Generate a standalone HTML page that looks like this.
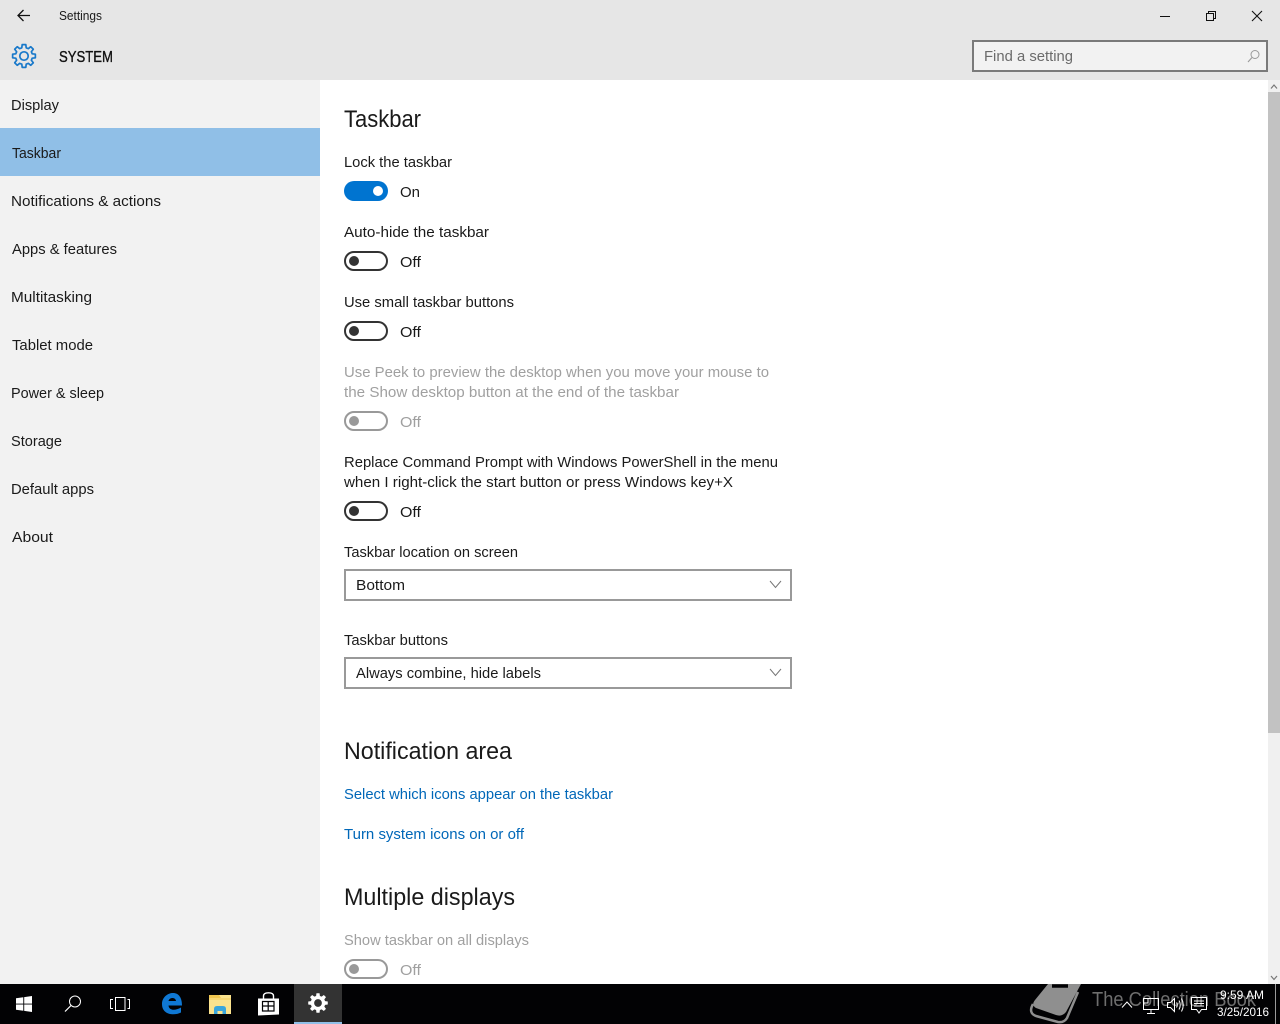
<!DOCTYPE html>
<html><head><meta charset="utf-8"><title>Settings</title>
<style>
html,body{margin:0;padding:0;background:#fff;width:1280px;height:1024px;overflow:hidden}
svg{display:block}
text{font-family:"Liberation Sans",sans-serif;font-size:15px;fill:#1a1a1a}
.h{font-size:24px}
.g{fill:#a0a0a0}
.l{fill:#0067b8}
</style></head><body>
<svg width="1280" height="1024" viewBox="0 0 1280 1024" xmlns="http://www.w3.org/2000/svg">
<rect width="1280" height="1024" fill="#fff"/>
<rect width="1280" height="80" fill="#e6e6e6"/>
<rect y="80" width="320" height="904" fill="#f2f2f2"/>
<rect y="128" width="320" height="48" fill="#90bfe7"/>

<!-- title bar -->
<path d="M18 15.500H30M23.500 10L18 15.500L23.500 21" fill="none" stroke="#111" stroke-width="1.300"/>
<text x="59" y="20" style="font-size:13px" textLength="43" lengthAdjust="spacingAndGlyphs">Settings</text>
<g transform="translate(24 56)" fill="none" stroke="#1979ca" stroke-width="1.700" stroke-linejoin="round">
<polygon points="8.21,-2.2 11.36,-1.8 11.36,1.8 8.21,2.2 7.36,4.25 9.3,6.76 6.76,9.3 4.25,7.36 2.2,8.21 1.8,11.36 -1.8,11.36 -2.2,8.21 -4.25,7.36 -6.76,9.3 -9.3,6.76 -7.36,4.25 -8.21,2.2 -11.36,1.8 -11.36,-1.8 -8.21,-2.2 -7.36,-4.25 -9.3,-6.76 -6.76,-9.3 -4.25,-7.36 -2.2,-8.21 -1.8,-11.36 1.8,-11.36 2.2,-8.21 4.25,-7.36 6.76,-9.3 9.3,-6.76 7.36,-4.25"/>
<circle r="4.200"/>
</g>
<text x="59" y="62" style="font-size:16px;fill:#111;stroke:#111;stroke-width:.35px" textLength="54" lengthAdjust="spacingAndGlyphs">SYSTEM</text>

<!-- window controls -->
<rect x="1160" y="16" width="10" height="1" fill="#111"/>
<path d="M1206.500 13.500H1213.500V20.500H1206.500ZM1208.500 13V11.500H1215.500V18.500H1214" fill="none" stroke="#111" stroke-width="1"/>
<path d="M1252 11L1262 21M1262 11L1252 21" stroke="#111" stroke-width="1.100" fill="none"/>

<!-- search -->
<rect x="973" y="41" width="294" height="30" fill="#f2f2f2" stroke="#7a7a7a" stroke-width="2"/>
<text x="984" y="61" style="fill:#6b6b6b" textLength="89" lengthAdjust="spacingAndGlyphs">Find a setting</text>
<circle cx="1255" cy="54.500" r="4" fill="none" stroke="#9a9a9a" stroke-width="1"/>
<path d="M1252 57.500L1248 62" stroke="#9a9a9a" stroke-width="1.100" fill="none"/>

<!-- sidebar -->
<text x="11" y="110" textLength="48" lengthAdjust="spacingAndGlyphs">Display</text>
<text x="12" y="158" textLength="49" lengthAdjust="spacingAndGlyphs">Taskbar</text>
<text x="11" y="206" textLength="150" lengthAdjust="spacingAndGlyphs">Notifications &amp; actions</text>
<text x="12" y="254" textLength="105" lengthAdjust="spacingAndGlyphs">Apps &amp; features</text>
<text x="11" y="302" textLength="81" lengthAdjust="spacingAndGlyphs">Multitasking</text>
<text x="12" y="350" textLength="81" lengthAdjust="spacingAndGlyphs">Tablet mode</text>
<text x="11" y="398" textLength="93" lengthAdjust="spacingAndGlyphs">Power &amp; sleep</text>
<text x="11" y="446" textLength="51" lengthAdjust="spacingAndGlyphs">Storage</text>
<text x="11" y="494" textLength="83" lengthAdjust="spacingAndGlyphs">Default apps</text>
<text x="12" y="542" textLength="41" lengthAdjust="spacingAndGlyphs">About</text>

<!-- content -->
<text class="h" x="344" y="127" textLength="77" lengthAdjust="spacingAndGlyphs">Taskbar</text>

<text x="344" y="167" textLength="108" lengthAdjust="spacingAndGlyphs">Lock the taskbar</text>
<rect x="344" y="181" width="44" height="20" rx="10" fill="#0074d0"/>
<circle cx="378" cy="191" r="5" fill="#fff"/>
<text x="400" y="197" textLength="20" lengthAdjust="spacingAndGlyphs">On</text>

<text x="344" y="237" textLength="145" lengthAdjust="spacingAndGlyphs">Auto-hide the taskbar</text>
<rect x="345" y="252" width="42" height="18" rx="9" fill="#fff" stroke="#333" stroke-width="2"/>
<circle cx="354" cy="261" r="5" fill="#333"/>
<text x="400" y="267" textLength="21" lengthAdjust="spacingAndGlyphs">Off</text>

<text x="344" y="307" textLength="170" lengthAdjust="spacingAndGlyphs">Use small taskbar buttons</text>
<rect x="345" y="322" width="42" height="18" rx="9" fill="#fff" stroke="#333" stroke-width="2"/>
<circle cx="354" cy="331" r="5" fill="#333"/>
<text x="400" y="337" textLength="21" lengthAdjust="spacingAndGlyphs">Off</text>

<text class="g" x="344" y="377" textLength="425" lengthAdjust="spacingAndGlyphs">Use Peek to preview the desktop when you move your mouse to</text>
<text class="g" x="344" y="397" textLength="335" lengthAdjust="spacingAndGlyphs">the Show desktop button at the end of the taskbar</text>
<rect x="345" y="412" width="42" height="18" rx="9" fill="#fff" stroke="#999" stroke-width="2"/>
<circle cx="354" cy="421" r="5" fill="#999"/>
<text class="g" x="400" y="427" textLength="21" lengthAdjust="spacingAndGlyphs">Off</text>

<text x="344" y="467" textLength="434" lengthAdjust="spacingAndGlyphs">Replace Command Prompt with Windows PowerShell in the menu</text>
<text x="344" y="487" textLength="389" lengthAdjust="spacingAndGlyphs">when I right-click the start button or press Windows key+X</text>
<rect x="345" y="502" width="42" height="18" rx="9" fill="#fff" stroke="#333" stroke-width="2"/>
<circle cx="354" cy="511" r="5" fill="#333"/>
<text x="400" y="517" textLength="21" lengthAdjust="spacingAndGlyphs">Off</text>

<text x="344" y="557" textLength="174" lengthAdjust="spacingAndGlyphs">Taskbar location on screen</text>
<rect x="345" y="570" width="446" height="30" fill="#fff" stroke="#999" stroke-width="2"/>
<text x="356" y="590" textLength="49" lengthAdjust="spacingAndGlyphs">Bottom</text>
<path d="M770 581L775.500 587.500L781 581" fill="none" stroke="#777" stroke-width="1"/>

<text x="344" y="645" textLength="104" lengthAdjust="spacingAndGlyphs">Taskbar buttons</text>
<rect x="345" y="658" width="446" height="30" fill="#fff" stroke="#999" stroke-width="2"/>
<text x="356" y="678" textLength="185" lengthAdjust="spacingAndGlyphs">Always combine, hide labels</text>
<path d="M770 669L775.500 675.500L781 669" fill="none" stroke="#777" stroke-width="1"/>

<text class="h" x="344" y="759" textLength="168" lengthAdjust="spacingAndGlyphs">Notification area</text>
<text class="l" x="344" y="799" textLength="269" lengthAdjust="spacingAndGlyphs">Select which icons appear on the taskbar</text>
<text class="l" x="344" y="839" textLength="180" lengthAdjust="spacingAndGlyphs">Turn system icons on or off</text>

<text class="h" x="344" y="905" textLength="171" lengthAdjust="spacingAndGlyphs">Multiple displays</text>
<text class="g" x="344" y="945" textLength="185" lengthAdjust="spacingAndGlyphs">Show taskbar on all displays</text>
<rect x="345" y="960" width="42" height="18" rx="9" fill="#fff" stroke="#999" stroke-width="2"/>
<circle cx="354" cy="969" r="5" fill="#999"/>
<text class="g" x="400" y="975" textLength="21" lengthAdjust="spacingAndGlyphs">Off</text>

<!-- scrollbar -->
<rect x="1268" y="80" width="12" height="904" fill="#f0f0f0"/>
<rect x="1268" y="92" width="12" height="641" fill="#c2c2c2"/>
<path d="M1271 88.500L1274 85L1277 88.500" fill="none" stroke="#777" stroke-width="1.200"/>
<path d="M1271 976L1274 979.500L1277 976" fill="none" stroke="#777" stroke-width="1.200"/>

<!-- taskbar -->
<rect y="984" width="1280" height="40" fill="#020204"/>
<rect x="294" y="984" width="48" height="40" fill="#333"/>
<rect x="294" y="1022" width="48" height="2" fill="#90bfe7"/>
<!-- start -->
<path d="M16 998.300L23.300 997.200V1003.600H16ZM24.200 997.100L32 996V1003.600H24.200ZM16 1004.500H23.300V1010.800L16 1009.800ZM24.200 1004.500H32V1012L24.200 1010.900Z" fill="#fff"/>
<!-- search -->
<circle cx="75" cy="1001.500" r="5.500" fill="none" stroke="#fff" stroke-width="1"/>
<path d="M71 1005.500L65 1011.500" stroke="#fff" stroke-width="1.200"/>
<!-- task view -->
<rect x="115.500" y="997.500" width="9.500" height="13" fill="none" stroke="#fff" stroke-width="1"/>
<path d="M113 999.500H110.500V1008.500H113M127.500 999.500H129.500V1008.500H127.500" fill="none" stroke="#fff" stroke-width="1"/>
<!-- edge -->
<path d="M162 1004C162 997 168 993 173 993C179 993 182 998 182 1005.500H168.500C169 1010.500 175 1011 181 1007.500V1012.500C174 1016 162 1015 162 1004ZM168.500 1001H176C175.500 997 169.500 997 168.500 1001Z" fill="#0f78d4" fill-rule="evenodd"/>
<!-- explorer -->
<rect x="209" y="995" width="22" height="19" fill="#fbe38e"/>
<path d="M209 995H219L221 998H209Z" fill="#efc650"/>
<path d="M209 998H231V1000H209Z" fill="#f7d774"/>
<path d="M214 1014V1009Q214 1006 217 1006H223Q226 1006 226 1009V1014H222.500V1011H217.500V1014Z" fill="#3aa6dc"/>
<!-- store -->
<path d="M258 998.500H279V1014.500L258 1015.500Z" fill="#fff"/>
<path d="M263.500 999V996Q263.500 992.800 268.500 992.800Q273.500 992.800 273.500 996V999" fill="none" stroke="#fff" stroke-width="1.400"/>
<path d="M262.500 1001.500H274V1011H262.500ZM262.500 1006H274M268.200 1001.500V1011" fill="none" stroke="#020204" stroke-width="1.200"/>
<!-- gear -->
<g transform="translate(318 1003) scale(.86)" fill="#fff" fill-rule="evenodd">
<path d="M8.21-2.2L11.36-1.8V1.8L8.21 2.2L7.36 4.25L9.3 6.76L6.76 9.3L4.25 7.36L2.2 8.21L1.8 11.36H-1.8L-2.2 8.21L-4.25 7.36L-6.76 9.3L-9.3 6.76L-7.36 4.25L-8.21 2.2L-11.36 1.8V-1.8L-8.21-2.2L-7.36-4.25L-9.3-6.76L-6.76-9.3L-4.25-7.36L-2.2-8.21L-1.8-11.36H1.8L2.2-8.21L4.25-7.36L6.76-9.3L9.3-6.76L7.36-4.25ZM4.500 0A4.500 4.500 0 1 0-4.500 0A4.500 4.500 0 1 0 4.500 0Z"/>
</g>

<!-- watermark -->
<path d="M1048 984H1081L1066 1012Q1062 1017 1056 1015L1036 1008Q1031 1005 1035 1000Z" fill="#8f8f8f"/>
<path d="M1033 1004Q1028 1013 1036 1016L1058 1022Q1064 1023 1067 1018L1078 992" fill="none" stroke="#8f8f8f" stroke-width="2.500"/>
<path d="M1052 986L1068 986" stroke="#020204" stroke-width="3.500"/>
<text x="1092" y="1006" style="font-size:20px;fill:#6e6e6e" textLength="164" lengthAdjust="spacingAndGlyphs">The Collection Book</text>

<!-- tray -->
<path d="M1122 1007.500L1127 1002L1132 1007.500" fill="none" stroke="#fff" stroke-width="1"/>
<path d="M1147.500 998.500H1158.500V1009.500H1143.500V1003.500M1151 1009.500V1013M1147 1013.500H1155" fill="none" stroke="#fff" stroke-width="1"/>
<rect x="1143.500" y="998.500" width="4.500" height="4.500" fill="none" stroke="#fff" stroke-width="1"/>
<path d="M1167.500 1002.500H1170.500L1174.500 998.500V1011.500L1170.500 1007.500H1167.500ZM1176.500 1002.500Q1178 1005 1176.500 1007.500M1179 1000.500Q1181.500 1005 1179 1009.500M1181.500 998.500Q1185 1005 1181.500 1011.500" fill="none" stroke="#fff" stroke-width="1"/>
<path d="M1191.500 997.500H1206.500V1009.500H1201.500L1199 1013L1196.500 1009.500H1191.500ZM1194 1001H1204M1194 1003.500H1204M1194 1006H1204" fill="none" stroke="#fff" stroke-width="1"/>
<text x="1220" y="999" style="font-size:12px;fill:#fff" textLength="44" lengthAdjust="spacingAndGlyphs">9:59 AM</text>
<text x="1217" y="1016" style="font-size:12px;fill:#fff" textLength="52" lengthAdjust="spacingAndGlyphs">3/25/2016</text>
<rect x="1275" y="984" width="1" height="40" fill="#9a9a9a"/>
</svg>
</body></html>
